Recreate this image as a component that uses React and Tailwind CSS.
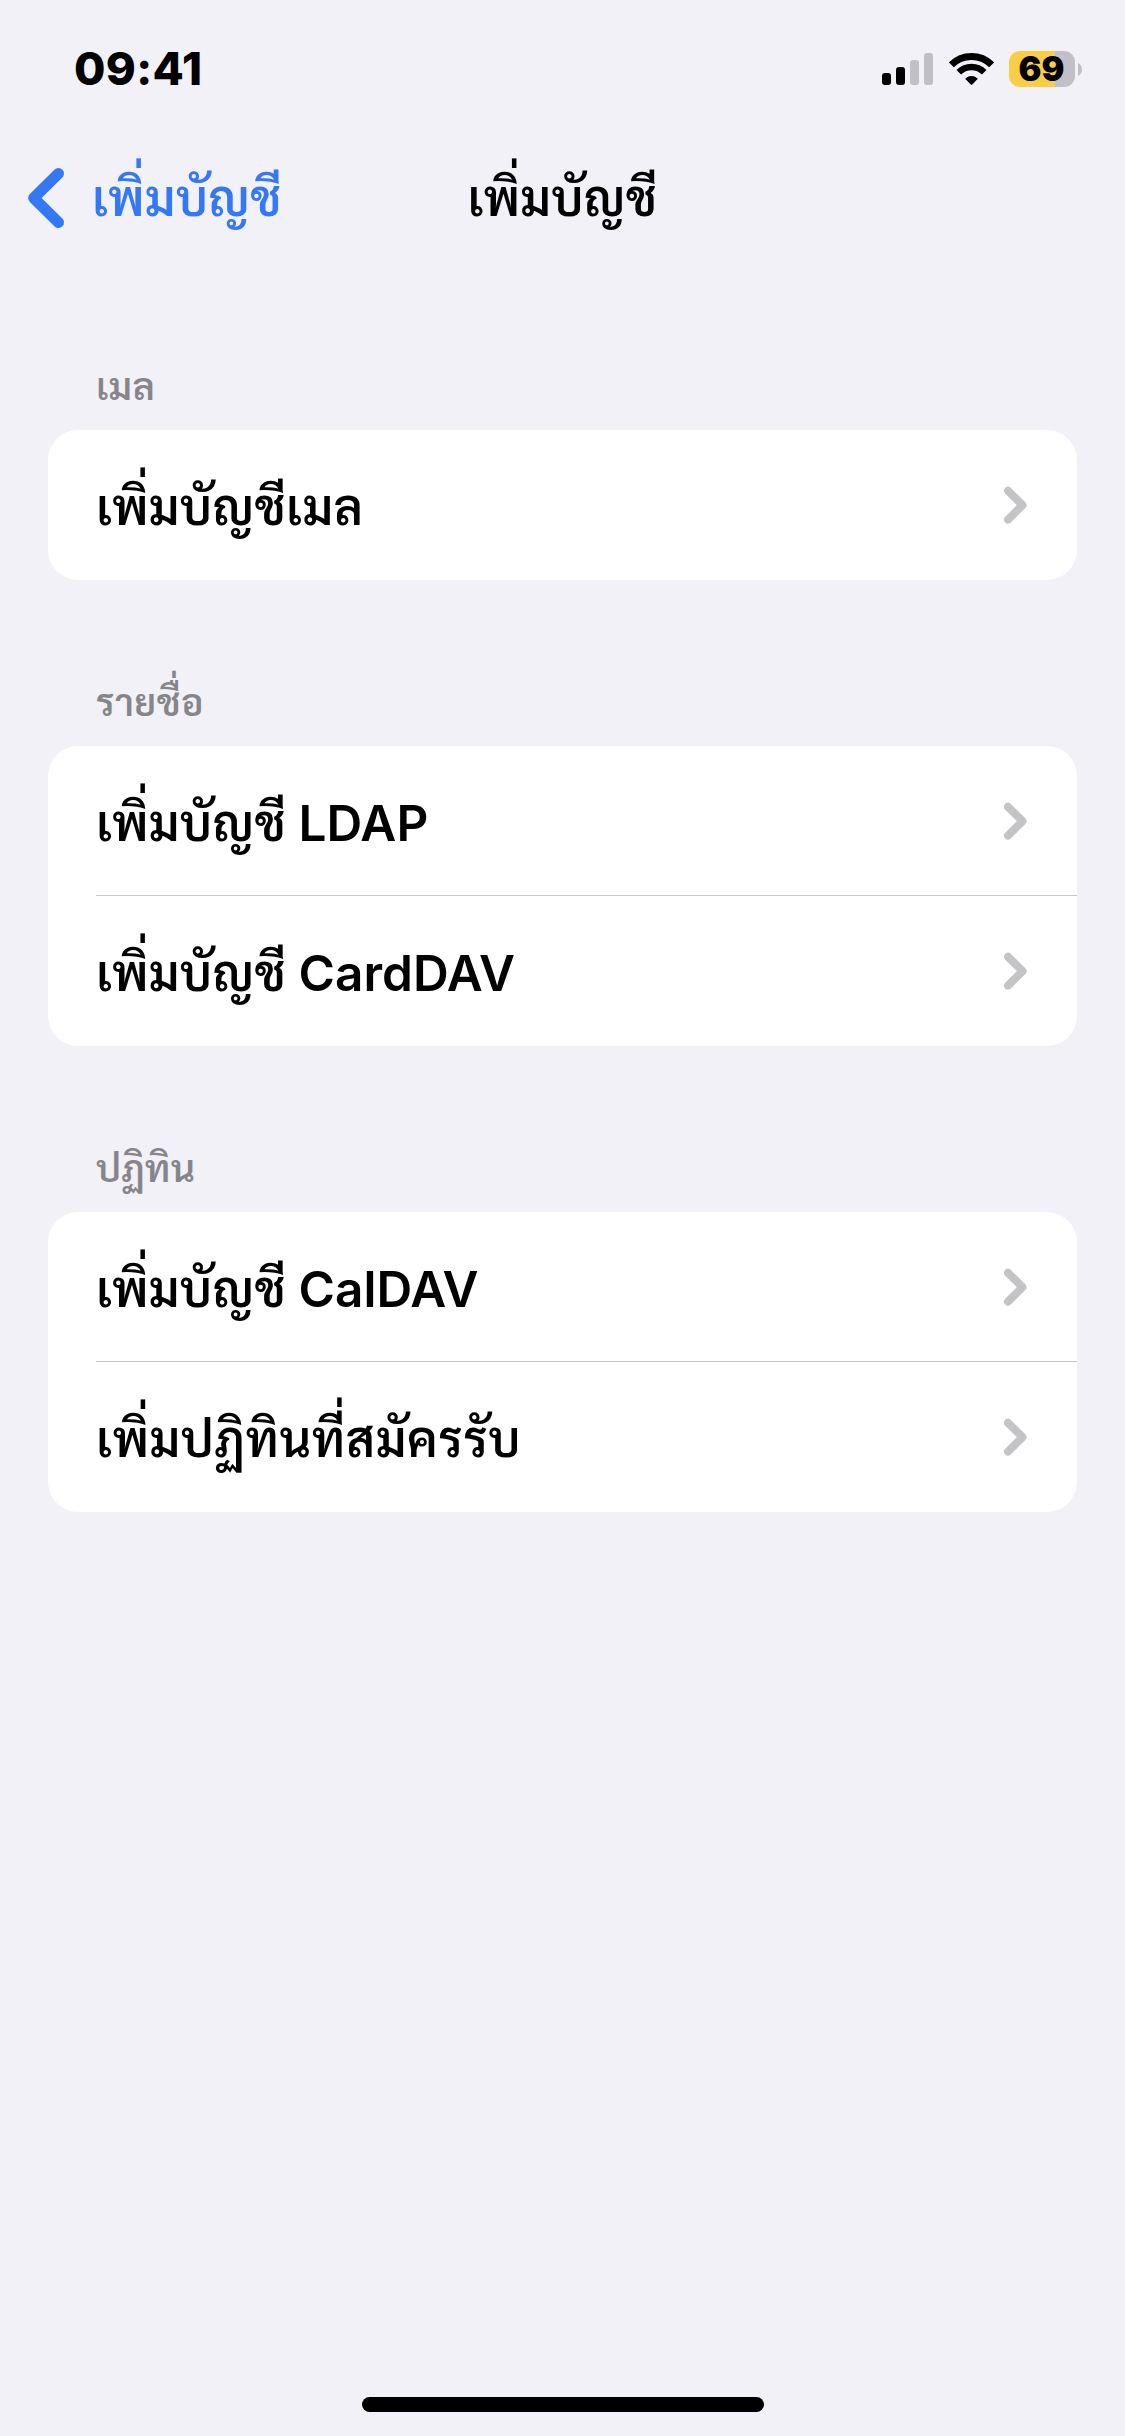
function Chevron() {
  return (
    <svg className="h-[38px] w-[24px] shrink-0" viewBox="0 0 24 38" fill="none" stroke="#c4c4c7" strokeWidth="8" strokeLinecap="round" strokeLinejoin="round">
      <path d="M5 4.800 19.500 19.200 5 33.600" />
    </svg>
  );
}

function Row({ thai, latin, wide, divided }) {
  return (
    <div className="flex h-[150px] pl-12">
      <div className={divided ? "flex flex-1 items-center justify-between border-b border-[#c6c6c8] pr-[50px]" : "flex flex-1 items-center justify-between pr-[50px]"}>
        <span className="whitespace-pre pt-[5px] text-[49px] font-semibold leading-[60px] text-black">
          <span className={wide ? "tracking-[0.9px]" : "tracking-[0.6px]"}>{thai}</span>
          {latin && <span className="text-[49.5px] font-[560]"> {latin}</span>}
        </span>
        <Chevron />
      </div>
    </div>
  );
}

function Section({ title, rows }) {
  return (
    <section className="px-12">
      <h2 className="flex h-[166px] items-end pb-[18px] pl-12 text-[37.5px] font-semibold leading-[50px] tracking-[0.5px] text-[#86858b]">{title}</h2>
      <div className="overflow-hidden rounded-[30px] bg-white">
        {rows.map((row, i) => (
          <Row key={i} {...row} divided={i < rows.length - 1} />
        ))}
      </div>
    </section>
  );
}

function StatusBar() {
  return (
    <div className="flex h-[132px] items-center justify-between pl-[74px] pr-[43px] pt-[6px]">
      <span className="text-[45.5px] font-extrabold leading-[50px] tracking-[0.3px]">09:41</span>
      <div className="flex items-center">
        <div className="flex h-8 items-end gap-[5px]">
          <div className="h-3 w-[9px] rounded-[3px] bg-black" />
          <div className="h-[18px] w-[9px] rounded-[3px] bg-black" />
          <div className="h-[25px] w-[9px] rounded-[3px] bg-[#c0c0c5]" />
          <div className="h-8 w-[9px] rounded-[3px] bg-[#c0c0c5]" />
        </div>
        <svg className="ml-4 h-[33px] w-[45px]" viewBox="0 0 45 33" fill="none" stroke="#000">
          <path d="M2.350 11.850a28.500 28.500 0 0 1 40.300 0" strokeWidth="7" />
          <path d="M9.800 19.300a18 18 0 0 1 25.400 0" strokeWidth="6.500" />
          <path d="M16.700 25.800a8.400 8.400 0 0 1 11.600 0L22.500 31.800Z" fill="#000" strokeWidth="1" strokeLinejoin="round" />
        </svg>
        <div className="ml-[15px] flex h-9 w-[66px] items-center justify-center rounded-[11px] bg-[linear-gradient(to_right,#f7ce46_46.5px,#c0c0c5_46.5px)]">
          <span className="pr-px text-[34px] font-black leading-9">69</span>
        </div>
        <svg className="ml-[3px] h-[13px] w-1" viewBox="0 0 4 13" fill="#c0c0c5">
          <path d="M0 0C5.300 2 5.300 11 0 13Z" />
        </svg>
      </div>
    </div>
  );
}

function NavBar() {
  return (
    <nav className="grid h-[132px] grid-cols-3 items-center text-[49px] font-semibold leading-[60px] tracking-[0.55px]">
      <a className="flex items-center gap-7 pl-7 text-[#3478f6]">
        <svg className="h-[60px] w-9" viewBox="0 0 36 60" fill="none" stroke="currentColor" strokeWidth="11" strokeLinecap="round" strokeLinejoin="round">
          <path d="M30.500 5.500 5.700 30 30.500 54.500" />
        </svg>
        <span className="pt-[2px]">เพิ่มบัญชี</span>
      </a>
      <h1 className="pt-[2px] text-center">เพิ่มบัญชี</h1>
    </nav>
  );
}

export default function App() {
  return (
    <div className="flex h-[2436px] w-[1125px] flex-col bg-[#f1f1f7] font-['Inter','Sarabun','Noto_Sans_Thai_Looped',sans-serif]">
      <StatusBar />
      <NavBar />
      <main className="flex-1">
        <Section title="เมล" rows={[{ thai: "เพิ่มบัญชีเมล" }]} />
        <Section title="รายชื่อ" rows={[{ thai: "เพิ่มบัญชี", latin: "LDAP" }, { thai: "เพิ่มบัญชี", latin: "CardDAV" }]} />
        <Section title="ปฏิทิน" rows={[{ thai: "เพิ่มบัญชี", latin: "CalDAV" }, { thai: "เพิ่มปฏิทินที่สมัครรับ", wide: true }]} />
      </main>
      <div className="mb-6 ml-[362px] h-[15px] w-[402px] rounded-full bg-black" />
    </div>
  );
}
